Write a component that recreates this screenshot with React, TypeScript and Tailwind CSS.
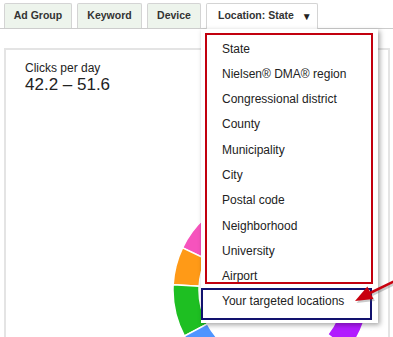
import React from "react";

const tabs = [
  { label: "Ad Group", w: "w-[68px]" },
  { label: "Keyword", w: "w-[65px]" },
  { label: "Device", w: "w-[54px]" },
];

const items = [
  "State",
  "Nielsen® DMA® region",
  "Congressional district",
  "County",
  "Municipality",
  "City",
  "Postal code",
  "Neighborhood",
  "University",
  "Airport",
  "Your targeted locations",
];

// donut segments, angles in degrees (svg coords, clockwise from +x)
const segments = [
  { from: 205.5, to: 250, color: "#f653bd" },
  { from: 183, to: 205.5, color: "#ff9a17" },
  { from: 152, to: 183, color: "#1ebf22" },
  { from: 110, to: 152, color: "#4f95ff" },
  { from: -20, to: 38, color: "#b21cff" },
];

function arc(cx: number, cy: number, r1: number, r2: number, a: number, b: number) {
  const p = (r: number, deg: number) => {
    const t = (deg * Math.PI) / 180;
    return `${cx + r * Math.cos(t)} ${cy + r * Math.sin(t)}`;
  };
  const large = b - a > 180 ? 1 : 0;
  return `M ${p(r2, a)} A ${r2} ${r2} 0 ${large} 1 ${p(r2, b)} L ${p(r1, b)} A ${r1} ${r1} 0 ${large} 0 ${p(r1, a)} Z`;
}

function Donut() {
  return (
    <svg className="ml-[167px] mt-[97px] block" width="196" height="196" viewBox="0 0 196 196">
      {segments.map((s) => (
        <path
          key={s.color}
          d={arc(98, 98, 72, 98, s.from, s.to)}
          fill={s.color}
          stroke="#fff"
          strokeWidth="1.5"
        />
      ))}
    </svg>
  );
}

export default function App() {
  return (
    <div className="relative h-[337px] w-[393px] overflow-hidden bg-white font-['Liberation_Sans',Arial,sans-serif] text-[#222]">
      <div className="flex h-[29px] items-end gap-[5px] border-b border-[#cccccc] pl-[4px]">
        {tabs.map((t) => (
          <div
            key={t.label}
            className={`${t.w} flex h-[25px] items-center justify-center rounded-t-[2px] border border-b-0 border-[#d4d4d4] bg-[#edf4ec] text-[10.5px] font-bold text-[#333]`}
          >
            {t.label}
          </div>
        ))}
        <div className="-mb-px flex h-[26px] w-[112px] items-center gap-[8px] rounded-t-[2px] border border-b-0 border-[#d4d4d4] bg-white pb-px pl-[11px] text-[10.5px] font-bold text-[#333]">
          <span>Location: State</span>
          <span className="text-[10px] text-[#222]">▼</span>
        </div>
      </div>

      <div className="ml-[4px] mt-[19px] h-[300px] w-[386px] border-2 border-[#e4e4e4] bg-white">
        <div className="pl-[19px] pt-[11px]">
          <p className="text-[12px] leading-[14px]">Clicks per day</p>
          <p className="text-[17px] leading-[20px]">42.2 – 51.6</p>
        </div>
        <Donut />
      </div>

      {/* dropdown menu */}
      <div className="absolute left-[201px] top-[29px] h-[294px] w-[177px] bg-white pl-[21px] pt-[7.5px] shadow-[2px_2px_5px_rgba(0,0,0,0.35)]">
        {items.map((i) => (
          <div key={i} className="text-[12px] leading-[25.3px] text-[#222]">
            {i}
          </div>
        ))}
      </div>

      {/* annotations */}
      <div className="absolute left-[205px] top-[33px] h-[251px] w-[168px] border-2 border-[#c2000e]" />
      <div className="absolute left-[201px] top-[288px] h-[32px] w-[171px] border-2 border-[#12126e]" />
      <svg className="absolute left-[350px] top-[275px]" width="43" height="35" viewBox="0 0 43 35">
        <g transform="translate(1.5 2)" opacity="0.3">
          <line x1="19" y1="18.5" x2="45" y2="6" stroke="#555" strokeWidth="2.5" />
          <polygon points="5,26 23.4,24 17.4,11.4" fill="#555" />
        </g>
        <line x1="19" y1="18.5" x2="45" y2="6" stroke="#c8000e" strokeWidth="2.5" />
        <polygon points="5,26 23.4,24 17.4,11.4" fill="#c8000e" />
      </svg>
    </div>
  );
}
